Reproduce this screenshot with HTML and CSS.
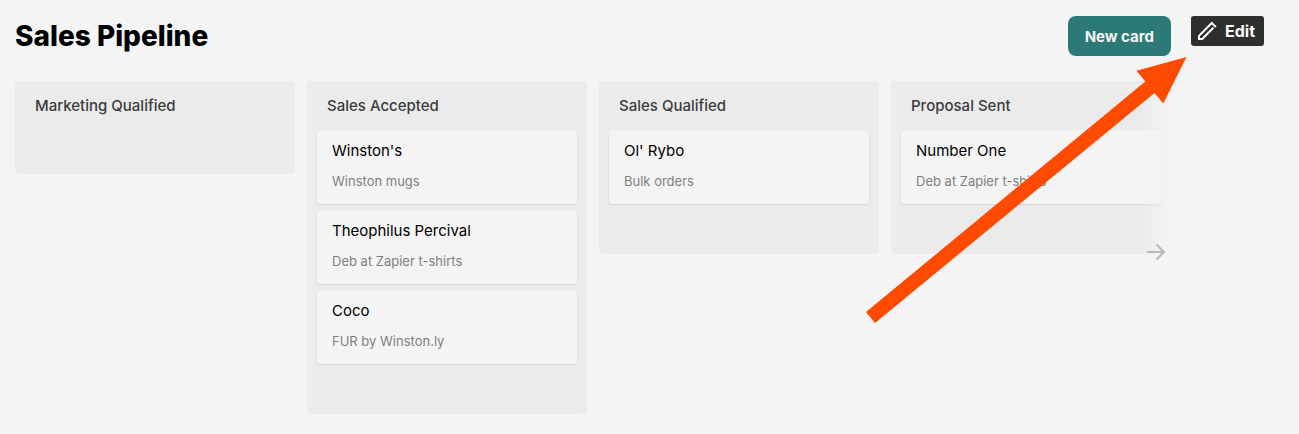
FILE: index.html
```html
<!DOCTYPE html>
<html lang="en">
<head>
    <meta charset="UTF-8">
    <meta name="viewport" content="width=device-width, initial-scale=1.0">
    <title>Sales Pipeline</title>
    <link rel="stylesheet" href="styles.css">
</head>
<body>
    <div class="page">
        <main class="pipeline">
            <header class="pipeline-header">
                <h1>Sales Pipeline</h1>
                <button type="button" class="btn-new">New card</button>
            </header>

            <div class="board-wrap">
                <div class="board">
                    <section class="column">
                        <h2>Marketing Qualified</h2>
                    </section>

                    <section class="column">
                        <h2>Sales Accepted</h2>
                        <article class="card">
                            <h3>Winston's</h3>
                            <p>Winston mugs</p>
                        </article>
                        <article class="card">
                            <h3>Theophilus Percival</h3>
                            <p>Deb at Zapier t-shirts</p>
                        </article>
                        <article class="card">
                            <h3>Coco</h3>
                            <p>FUR by Winston.ly</p>
                        </article>
                    </section>

                    <section class="column">
                        <h2>Sales Qualified</h2>
                        <article class="card">
                            <h3>Ol' Rybo</h3>
                            <p>Bulk orders</p>
                        </article>
                    </section>

                    <section class="column">
                        <h2>Proposal Sent</h2>
                        <article class="card">
                            <h3>Number One</h3>
                            <p>Deb at Zapier t-shirts</p>
                        </article>
                    </section>
                </div>

                <div class="board-fade"></div>
                <button type="button" class="scroll-next" aria-label="Scroll right">
                    <svg width="20" height="18" viewBox="0 0 20 18" fill="none" stroke="#b8b8b8" stroke-width="2">
                        <path d="M1 9H18M10.500 1.500L18 9L10.500 16.500"/>
                    </svg>
                </button>
            </div>
        </main>

        <button type="button" class="btn-edit">
            <svg width="20" height="20" viewBox="0 0 20 20" fill="none" stroke="#fffdf9" stroke-width="2">
                <path d="M18.900 6.100L14.800 2L2 14.800V18H5.200L16.400 6.800"/>
            </svg>
            Edit
        </button>

        <!-- Arrow pointing at the edit button -->
        <svg class="pointer" width="321" height="267" viewBox="0 0 321 267" aria-hidden="true">
            <path fill="#ff4a00" d="M0 255L279.300 24.500L270.500 13.800L320.500 0L297.300 46.500L288.500 36L9 266Z"/>
        </svg>
    </div>
</body>
</html>
```
FILE: styles.css
```css
* {
    margin: 0;
    padding: 0;
    box-sizing: border-box;
}

body {
    font-family: Inter, 'Liberation Sans', sans-serif;
    background: #f4f4f4;
    color: #000;
}

button {
    font-family: inherit;
    border: none;
    cursor: pointer;
}

.page {
    position: relative;
    display: flex;
    align-items: flex-start;
    gap: 20px;
    min-height: 100vh;
    padding: 16px 35px 20px 15px;
}

.pipeline {
    flex: 1;
    min-width: 0;
}

.pipeline-header {
    display: flex;
    align-items: center;
    justify-content: space-between;
    margin-bottom: 25px;
}

.pipeline-header h1 {
    font-size: 28px;
    line-height: 40px;
    font-weight: 800;
}

.btn-new {
    height: 40px;
    padding: 0 17px;
    border-radius: 8px;
    background: #2b7a78;
    color: #f4f4f4;
    font-size: 15px;
    font-weight: 700;
}

.btn-edit {
    display: flex;
    align-items: center;
    gap: 8px;
    height: 30px;
    padding: 0 9px 0 6px;
    border-radius: 3px;
    background: #2d2e2e;
    color: #fffdf9;
    font-size: 16px;
    font-weight: 700;
}

/* Board */
.board-wrap {
    position: relative;
}

.board {
    display: flex;
    align-items: flex-start;
    gap: 12px;
    overflow: hidden;
}

.column {
    flex: 0 0 280px;
    padding: 0 10px 44px;
    border-radius: 4px;
    background: #ebebeb;
}

.column h2 {
    padding: 13px 10px 12px;
    font-size: 15px;
    line-height: 24px;
    font-weight: 500;
    color: #3c3c3c;
}

.card {
    margin-bottom: 6px;
    padding: 10px 15px 13px;
    border-radius: 4px;
    background: #f4f4f4;
    box-shadow: 0 1px 2px rgba(0, 0, 0, 0.1);
}

.card h3 {
    margin-bottom: 9px;
    font-size: 15px;
    line-height: 22px;
    font-weight: 400;
}

.card p {
    font-size: 13px;
    line-height: 20px;
    color: #808080;
}

.board-fade {
    position: absolute;
    top: 0;
    right: 0;
    bottom: 0;
    width: 30px;
    background: linear-gradient(to right, rgba(244, 244, 244, 0), #f4f4f4);
}

.scroll-next {
    position: absolute;
    top: 162px;
    right: 5px;
    display: flex;
    background: none;
}

.pointer {
    position: absolute;
    top: 57px;
    right: 112px;
    pointer-events: none;
}
```
